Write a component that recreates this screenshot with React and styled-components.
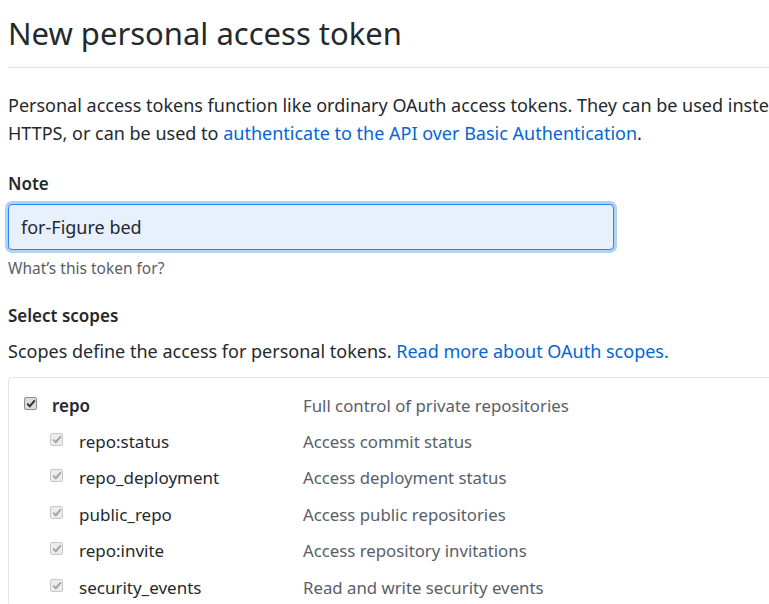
import React from "react";
import styled, { createGlobalStyle } from "styled-components";

const GlobalStyle = createGlobalStyle`
  html, body {
    margin: 0;
    padding: 0;
    background: #fff;
    overflow: hidden;
  }
  body {
    font-family: "Noto Sans", "Open Sans", sans-serif;
    color: #24292e;
  }
`;

const Page = styled.div`
  width: 1100px;
  padding: 0 0 0 8px;
`;

const Header = styled.div`
  border-bottom: 1px solid #e1e4e8;
  padding: 13px 0 14px;
  margin-bottom: 23px;
`;

const Title = styled.h1`
  margin: 0;
  font-size: 31px;
  font-weight: 400;
  line-height: 40px;
  color: #24292e;
`;

const Lead = styled.p`
  margin: 0 0 ${(p) => p.$gap || "24px"};
  font-size: 18px;
  line-height: 28px;
`;

const Link = styled.a`
  color: #0366d6;
  text-decoration: none;
`;

const Label = styled.div`
  font-size: 17px;
  font-weight: 600;
  line-height: 26px;
  margin-bottom: ${(p) => p.$gap || "8px"};
`;

const Field = styled.div`
  margin-bottom: 23px;
`;

const Input = styled.input`
  box-sizing: border-box;
  width: 606px;
  height: 46px;
  padding: 0 12px;
  font-family: inherit;
  font-size: 18px;
  color: #24292e;
  background: #e8f0fe;
  border: 1px solid #2188ff;
  border-radius: 4px;
  box-shadow: 0 0 0 3px rgba(3, 102, 214, 0.3);
  outline: none;
  display: block;
`;

const Hint = styled.div`
  margin-top: 6px;
  font-size: 15.5px;
  color: #586069;
  line-height: 24px;
`;

const ScopeBox = styled.div`
  border: 1px solid #e1e4e8;
  border-radius: 4px;
  padding: 9px 0 0 15px;
`;

const Row = styled.div`
  display: flex;
  align-items: center;
  height: 36.4px;
`;

const Name = styled.div`
  box-sizing: border-box;
  display: flex;
  align-items: center;
  flex: 0 0 279px;
  padding-left: ${(p) => (p.$sub ? "26px" : "0")};
  font-size: 17px;
  font-weight: ${(p) => (p.$sub ? 400 : 600)};
  color: #24292e;
`;

const Box = styled.span`
  box-sizing: border-box;
  width: 13px;
  height: 13px;
  margin-right: ${(p) => (p.$sub ? "16px" : "15px")};
  border: 1px solid ${(p) => (p.$sub ? "#c8c8c8" : "#8f8f8f")};
  border-radius: 2px;
  background: ${(p) => (p.$sub ? "#ececec" : "#dcdcdc")};
  display: inline-flex;
  align-items: center;
  justify-content: center;
  position: relative;
  top: -2px;
`;

const Desc = styled.div`
  font-size: 16.8px;
  color: #586069;
`;

const Check = ({ sub }) => (
  <Box $sub={sub}>
    <svg width="10" height="9" viewBox="0 0 10 9">
      <path
        d="M1.2 4.6 L3.8 7.2 L8.8 1.4"
        fill="none"
        stroke={sub ? "#a4a4a4" : "#333"}
        strokeWidth="2"
      />
    </svg>
  </Box>
);

const scopes = [
  { name: "repo", desc: "Full control of private repositories" },
  { name: "repo:status", desc: "Access commit status", sub: true },
  { name: "repo_deployment", desc: "Access deployment status", sub: true },
  { name: "public_repo", desc: "Access public repositories", sub: true },
  { name: "repo:invite", desc: "Access repository invitations", sub: true },
  { name: "security_events", desc: "Read and write security events", sub: true },
];

export default function App() {
  return (
    <Page>
      <GlobalStyle />
      <Header>
        <Title>New personal access token</Title>
      </Header>
      <Lead>
        Personal access tokens function like ordinary OAuth access tokens. They
        can be used instead of a password for Git over
        <br />
        HTTPS, or can be used to{" "}
        <Link href="#">authenticate to the API over Basic Authentication</Link>.
      </Lead>
      <Field>
        <Label $gap="7px">Note</Label>
        <Input defaultValue="for-Figure bed" />
        <Hint>What’s this token for?</Hint>
      </Field>
      <Label>Select scopes</Label>
      <Lead $gap="12px">
        Scopes define the access for personal tokens.{" "}
        <Link href="#">Read more about OAuth scopes.</Link>
      </Lead>
      <ScopeBox>
        {scopes.map((s) => (
          <Row key={s.name}>
            <Name $sub={s.sub}>
              <Check sub={s.sub} />
              {s.name}
            </Name>
            <Desc>{s.desc}</Desc>
          </Row>
        ))}
      </ScopeBox>
    </Page>
  );
}
